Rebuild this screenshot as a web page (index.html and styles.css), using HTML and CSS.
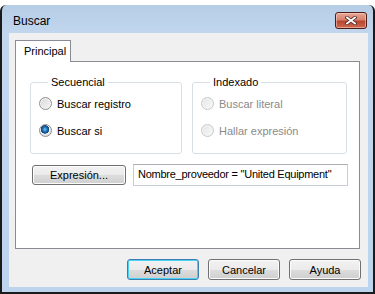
FILE: index.html
```html
<!DOCTYPE html>
<html>
<head>
  <link rel="stylesheet" href="styles.css">
</head>
<body>
  <div class="window">
    <div class="titlebar">
      <span class="title">Buscar</span>
      <div class="close">
        <svg width="12" height="9" viewBox="0 0 12 9">
          <path d="M2 1.5 L10 7.5 M10 1.5 L2 7.5" stroke="#4a2a24" stroke-width="3.4" stroke-linecap="square"/>
          <path d="M2 1.5 L10 7.5 M10 1.5 L2 7.5" stroke="#fff" stroke-width="1.8" stroke-linecap="square"/>
        </svg>
      </div>
    </div>
    <div class="client">
      <div class="tabs">
        <div class="tab active">Principal</div>
      </div>
      <div class="panel">
        <div class="groups">
          <fieldset class="group seq">
            <legend>Secuencial</legend>
            <div class="radio"><span class="circle"></span>Buscar registro</div>
            <div class="radio"><span class="circle checked"></span>Buscar si</div>
          </fieldset>
          <fieldset class="group idx disabled">
            <legend>Indexado</legend>
            <div class="radio"><span class="circle"></span>Buscar literal</div>
            <div class="radio"><span class="circle"></span>Hallar expresión</div>
          </fieldset>
        </div>
        <div class="expr-row">
          <div class="btn expr">Expresión...</div>
          <div class="input">Nombre_proveedor = "United Equipment"</div>
        </div>
      </div>
      <div class="actions">
        <div class="btn default">Aceptar</div>
        <div class="btn">Cancelar</div>
        <div class="btn">Ayuda</div>
      </div>
    </div>
  </div>
</body>
</html>
```

FILE: styles.css
```css
* {
  margin: 0;
  padding: 0;
  box-sizing: border-box;
}

body {
  width: 375px;
  height: 294px;
  background: #fff;
  font-family: "Liberation Sans", Arial, sans-serif;
  font-size: 11px;
  color: #000;
  overflow: hidden;
  white-space: nowrap;
}

.window {
  margin-top: 5px;
  height: 289px;
  display: flex;
  flex-direction: column;
  border: 2px solid #1b1b1b;
  border-top: none;
  border-radius: 6px 6px 0 0;
  background: linear-gradient(#b6cde6, #c2d7ee 30px, #bdd4ee);
  padding: 0 5px 5px 7px;
}

.titlebar {
  height: 28px;
  display: flex;
  align-items: center;
  justify-content: space-between;
  padding: 0 1px 0 4px;
}

.title {
  font-size: 12px;
  margin-top: 3px;
}

.close {
  width: 32px;
  height: 17px;
  margin-top: 2px;
  border: 1px solid #4b1d17;
  border-radius: 3px;
  background: linear-gradient(#e9a796, #d5826e 45%, #b9452f 55%, #cf6a52);
  display: flex;
  align-items: center;
  justify-content: center;
  box-shadow: inset 0 0 0 1px rgba(255, 220, 210, 0.5);
}

.client {
  flex: 1;
  background: #f0f0f0;
  display: flex;
  flex-direction: column;
  padding: 7px 7px 0 6px;
}

.tabs {
  display: flex;
  height: 21px;
}

.tab {
  width: 56px;
  height: 22px;
  padding: 4px 0 0 8px;
  border: 1px solid #898c95;
  border-bottom: none;
  background: #fff;
  position: relative;
  z-index: 1;
}

.panel {
  width: 345px;
  height: 188px;
  border: 1px solid #898c95;
  background: #fff;
  padding: 14px 0 0 14px;
}

.groups {
  display: flex;
  gap: 10px;
}

.group {
  height: 78px;
  border: 1px solid #d5dfe5;
  border-radius: 3px;
  padding: 8px 0 0 8px;
  display: flex;
  flex-direction: column;
  gap: 14px;
}

.group.seq {
  width: 152px;
}

.group.idx {
  width: 155px;
}

.group legend {
  margin-left: 9px;
  padding: 0 3px;
  line-height: 13px;
}

.radio {
  display: flex;
  align-items: center;
  gap: 5px;
  height: 13px;
}

.circle {
  width: 13px;
  height: 13px;
  border-radius: 50%;
  border: 1px solid #8f8f8f;
  background: linear-gradient(135deg, #d8d8d8, #f6f6f6);
  box-shadow: inset 0 0 0 1px #f4f4f4;
}

.circle.checked {
  background: radial-gradient(circle at 45% 40%, #9fd3f5 0, #2c8bd0 1.5px, #164f8e 3.5px, #16437a 4px, #f4f4f4 4.5px, #e0e0e0 6px);
  box-shadow: none;
}

.disabled {
  color: #8a8a8a;
}

.disabled legend {
  color: #000;
}

.disabled .circle {
  border-color: #c8c8c8;
  background: linear-gradient(135deg, #e6e6e6, #f8f8f8);
}

.expr-row {
  display: flex;
  align-items: center;
  gap: 7px;
  margin-top: 10px;
  padding-left: 2px;
}

.btn {
  height: 21px;
  border: 1px solid #707070;
  border-radius: 3px;
  background: linear-gradient(#f2f2f2, #ebebeb 50%, #dddddd 50%, #cfcfcf);
  box-shadow: inset 0 0 0 1px #fcfcfc;
  display: flex;
  align-items: center;
  justify-content: center;
}

.btn.expr {
  width: 94px;
  height: 20px;
}

.input {
  width: 215px;
  height: 22px;
  border: 1px solid #c9ced6;
  border-top-color: #abadb3;
  background: #fff;
  padding: 3px 0 0 4px;
  letter-spacing: -0.25px;
}

.actions {
  display: flex;
  justify-content: flex-end;
  gap: 9px;
  margin-top: 10px;
}

.actions .btn {
  width: 72px;
}

.btn.default {
  border-color: #3c7fb1;
  box-shadow: inset 0 0 0 1px #48d2f5;
}
```
